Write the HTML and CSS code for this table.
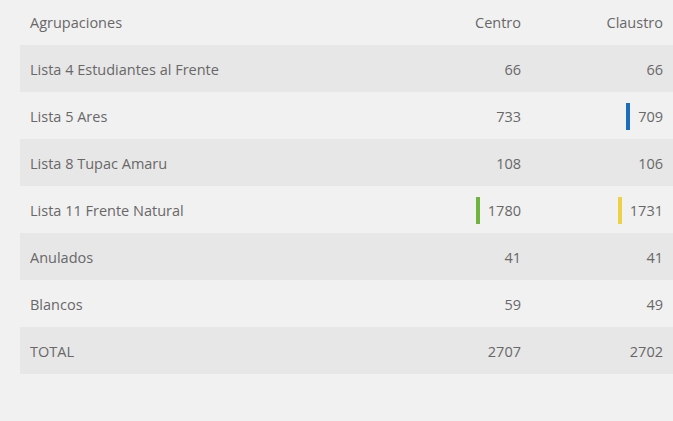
FILE: index.html
```html
<!DOCTYPE html>
<html lang="es">
<head>
<meta charset="utf-8">
<title>Resultados</title>
<link rel="stylesheet" href="styles.css">
</head>
<body>
<table class="results">
  <thead>
    <tr><th class="name">Agrupaciones</th><th class="num">Centro</th><th class="num">Claustro</th></tr>
  </thead>
  <tbody>
    <tr class="odd"><td class="name">Lista 4 Estudiantes al Frente</td><td class="num">66</td><td class="num">66</td></tr>
    <tr><td class="name">Lista 5 Ares</td><td class="num">733</td><td class="num"><span class="mark blue">709</span></td></tr>
    <tr class="odd"><td class="name">Lista 8 Tupac Amaru</td><td class="num">108</td><td class="num">106</td></tr>
    <tr><td class="name">Lista 11 Frente Natural</td><td class="num"><span class="mark green">1780</span></td><td class="num"><span class="mark yellow">1731</span></td></tr>
    <tr class="odd"><td class="name">Anulados</td><td class="num">41</td><td class="num">41</td></tr>
    <tr><td class="name">Blancos</td><td class="num">59</td><td class="num">49</td></tr>
    <tr class="odd"><td class="name">TOTAL</td><td class="num">2707</td><td class="num">2702</td></tr>
  </tbody>
</table>
</body>
</html>
```
FILE: styles.css
```css
html, body {
  margin: 0;
  padding: 0;
  background: #f1f1f1;
}
body {
  font-family: "Open Sans", "Noto Sans", sans-serif;
  font-size: 14.5px;
  color: #686868;
}
.results {
  margin-left: 20px;
  width: 653px;
  border-collapse: collapse;
  table-layout: fixed;
}
.results th,
.results td {
  padding: 0 11px 0 10px;
  font-weight: 400;
  white-space: nowrap;
}
.results thead tr {
  height: 45px;
}
.results thead th {
  vertical-align: middle;
}
.results tbody tr {
  height: 47px;
}
.results tbody td {
  padding-top: 1px;
}
.results tbody tr.odd {
  background: #e7e7e7;
}
.results .name {
  text-align: left;
  width: 350px;
}
.results .num {
  text-align: right;
  width: 120px;
}
.results th.num:last-child,
.results td.num:last-child {
  width: 121px;
}
.mark {
  display: inline-block;
  border-left: 4px solid;
  padding-left: 8px;
  line-height: 27px;
}
.blue { border-color: #1b6dbb; }
.green { border-color: #6fb43f; }
.yellow { border-color: #ecd244; }
```
